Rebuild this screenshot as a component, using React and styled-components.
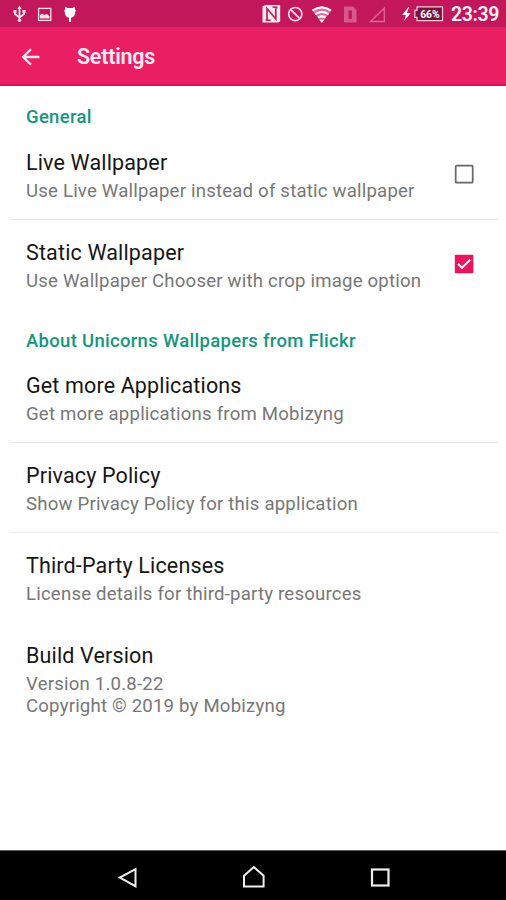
import React from 'react';
import styled, { createGlobalStyle } from 'styled-components';

const GlobalStyle = createGlobalStyle`
  * { box-sizing: border-box; }
  body { margin: 0; background: #fff; font-family: Roboto, 'Liberation Sans', sans-serif; }
  svg { display: block; flex: none; }
`;

const Screen = styled.div`
  display: flex;
  flex-direction: column;
  width: 506px;
  height: 900px;
  background: #fefefe;
  overflow: hidden;
`;

const StatusBar = styled.header`
  display: flex;
  flex: none;
  justify-content: space-between;
  height: 27px;
  background: #c2185b;
`;

const Clock = styled.time`
  width: 56px;
  padding-left: 1px;
  line-height: 29px;
  font-size: 19.5px;
  font-weight: 600;
  letter-spacing: -0.4px;
  color: #fff0f6;
  white-space: nowrap;
`;

const StatusGroup = styled.div`
  display: flex;
`;

const BatteryLabel = styled.text`
  font: 700 10px Roboto, sans-serif;
  fill: #fff;
`;

const Toolbar = styled.div`
  display: flex;
  flex: none;
  align-items: center;
  height: 59px;
  padding-left: 19px;
  gap: 34px;
  background: #e91e63;
  border-bottom: 2px solid #dc0f55;
`;

const ToolbarTitle = styled.h1`
  margin: 0;
  line-height: 28px;
  font-size: 21.5px;
  font-weight: 600;
  letter-spacing: -0.25px;
  color: #ffeaf2;
  padding-top: 3px;
`;

const Content = styled.main`
  flex: 1;
`;

const SectionTitle = styled.h2`
  height: 44px;
  margin: 0;
  padding: ${(p) => (p.$lowered ? '20px' : '19px')} 26px 0;
  line-height: 24px;
  font-size: 18.5px;
  font-weight: 500;
  letter-spacing: 0.3px;
  color: #15967f;
`;

const Row = styled.div`
  display: flex;
  justify-content: space-between;
  align-items: center;
  height: ${(p) => p.$height || 89}px;
  padding: 2px 32px 0 26px;
`;

const Control = styled.div`
  margin-bottom: 4px;
`;

const Divider = styled.hr`
  height: 1px;
  margin: 0 8px 0 10px;
  border: 0;
  background: ${(p) => p.$color};
`;

const RowTitle = styled.div`
  line-height: 26px;
  font-size: 21.5px;
  letter-spacing: 0.15px;
  color: #161616;
`;

const RowSummary = styled.div`
  padding-top: 4px;
  line-height: 22px;
  font-size: 18.6px;
  letter-spacing: 0.2px;
  color: #777;
  white-space: pre-line;
`;

const NavBar = styled.nav`
  display: flex;
  flex: none;
  justify-content: space-between;
  height: 50px;
  padding: 0 113px 0 115px;
  background: #000;
  border-top: 1px solid #606060;
`;

function Checkbox({ checked }) {
  return (
    <svg width="20" height="20" viewBox="0 0 20 20" fill="none">
      {checked ? (
        <>
          <rect x="0.8" y="0.8" width="18.6" height="18.4" rx="1" fill="#e9165f" />
          <path d="M4 9.8 8 13.8 16.2 5.6" stroke="#fff" strokeWidth="2" />
        </>
      ) : (
        <rect x="1.7" y="1.7" width="17" height="17" rx="0.8" stroke="#666" strokeWidth="1.7" />
      )}
    </svg>
  );
}

function NotificationIcons() {
  return (
    <svg width="90" height="27" fill="none" stroke="#fbdfea" strokeWidth="1.8">
      <path d="M19.5 8v12M15 11v3l4.5 3.5L24 14v-3" />
      <path d="m19.5 5.5 2.2 3.5h-4.4z" fill="#fbdfea" stroke="none" />
      <path d="M13.5 10h3v3h-3zM22.5 10h3v3h-3z" fill="#fbdfea" stroke="none" />
      <circle cx="19.5" cy="20.3" r="1.8" fill="#fbdfea" stroke="none" />
      <rect x="38.6" y="8.4" width="12.2" height="12" strokeWidth="1.3" />
      <path d="M40 18.6v-3.6l2.2-1.4 2 1.5 2.6-1 2.7 2.1v2.4z" fill="#fbdfea" stroke="none" />
      <path d="M65.4 6.4 67.4 8h5.2l2-1.6.4 3.2 1 1-.8 1.4c0 3.3-2 5.7-4.2 5.7V22h-2v-4.3c-2.2 0-4.2-2.4-4.2-5.7l-.8-1.4 1-1z" fill="#fff" stroke="none" />
    </svg>
  );
}

function SystemIcons() {
  return (
    <svg width="190" height="27" viewBox="260 0 190 27" fill="none">
      <path d="M262.5 6.5 265 5h15.2v16.2l-2 1.3h-15.7z" fill="#ffe8f2" />
      <path d="M267 19.5V8.5L275.8 19V8M265.6 20l5 .3M272.5 7l5 .3" stroke="#b5245b" strokeWidth="1.7" />
      <circle cx="295.3" cy="14.1" r="6.6" stroke="#ffd7e7" strokeWidth="1.7" />
      <path d="m291 9.8 8.6 8.6" stroke="#ffd7e7" strokeWidth="1.7" />
      <path d="M312.3 10.5q9.5-6.8 19 0L322 23z" fill="#e6689c" />
      <path d="M312.5 10.7q9.3-6.8 18.6 0M315.2 14.3q6.7-4.8 13.3 0M318.1 17.6q3.7-2.7 7.4 0" stroke="#fff" strokeWidth="2.2" />
      <path d="m319.3 19.7 2.5 3.1 2.5-3.1z" fill="#fff" />
      <path d="M344 6.6h9l3.6 3.8v12H344z" fill="#d8588e" />
      <path d="M350.2 10.5v8.5" stroke="#c2185b" strokeWidth="3.4" />
      <path d="M370.5 21.5 384.3 8v13.5z" stroke="#dd659a" strokeWidth="1.3" />
      <path d="m408.5 7-6.3 8h3.7L404.1 21l6.6-8h-3.9l2.4-6z" fill="#fff" />
      <path d="M417 6.9h25.5v13.8H417v-3.4h-2.2v-7H417z" fill="#78133d" stroke="#ffc7dc" strokeWidth="1.2" />
      <BatteryLabel x="420.2" y="17.5" textLength="19.5" lengthAdjust="spacingAndGlyphs">66%</BatteryLabel>
    </svg>
  );
}

function Preference({ title, summary, height, control }) {
  return (
    <Row $height={height}>
      <div>
        <RowTitle>{title}</RowTitle>
        <RowSummary>{summary}</RowSummary>
      </div>
      {control && <Control>{control}</Control>}
    </Row>
  );
}

export default function App() {
  return (
    <Screen>
      <GlobalStyle />
      <StatusBar>
        <NotificationIcons />
        <StatusGroup>
          <SystemIcons />
          <Clock>23:39</Clock>
        </StatusGroup>
      </StatusBar>
      <Toolbar>
        <svg width="24" height="24" fill="none" stroke="#ffe5ef" strokeWidth="2.3">
          <path d="M20.5 13H4.5M12 5.2 4.2 13l7.8 7.8" />
        </svg>
        <ToolbarTitle>Settings</ToolbarTitle>
      </Toolbar>
      <Content>
        <SectionTitle>General</SectionTitle>
        <Preference title="Live Wallpaper" summary="Use Live Wallpaper instead of static wallpaper" control={<Checkbox />} />
        <Divider $color="#e5e5e5" />
        <Preference title="Static Wallpaper" summary="Use Wallpaper Chooser with crop image option" control={<Checkbox checked />} />
        <SectionTitle $lowered>About Unicorns Wallpapers from Flickr</SectionTitle>
        <Preference title="Get more Applications" summary="Get more applications from Mobizyng" />
        <Divider $color="#e5e5e5" />
        <Preference title="Privacy Policy" summary="Show Privacy Policy for this application" />
        <Divider $color="#f0f0f0" />
        <Preference title="Third-Party Licenses" summary="License details for third-party resources" />
        <Preference height={114} title="Build Version" summary={'Version 1.0.8-22\nCopyright © 2019 by Mobizyng'} />
      </Content>
      <NavBar>
        <svg width="26" height="49" fill="none" stroke="#eee" strokeWidth="2">
          <path d="M20.5 18.2v17L4.8 26.5z" />
        </svg>
        <svg width="26" height="49" fill="none" stroke="#eee" strokeWidth="2">
          <path d="M3 24.8 12.8 16l9.8 8.8V35.5H3z" />
        </svg>
        <svg width="26" height="49" fill="none" stroke="#eee" strokeWidth="2.2">
          <rect x="5" y="18.5" width="16.5" height="16" />
        </svg>
      </NavBar>
    </Screen>
  );
}
